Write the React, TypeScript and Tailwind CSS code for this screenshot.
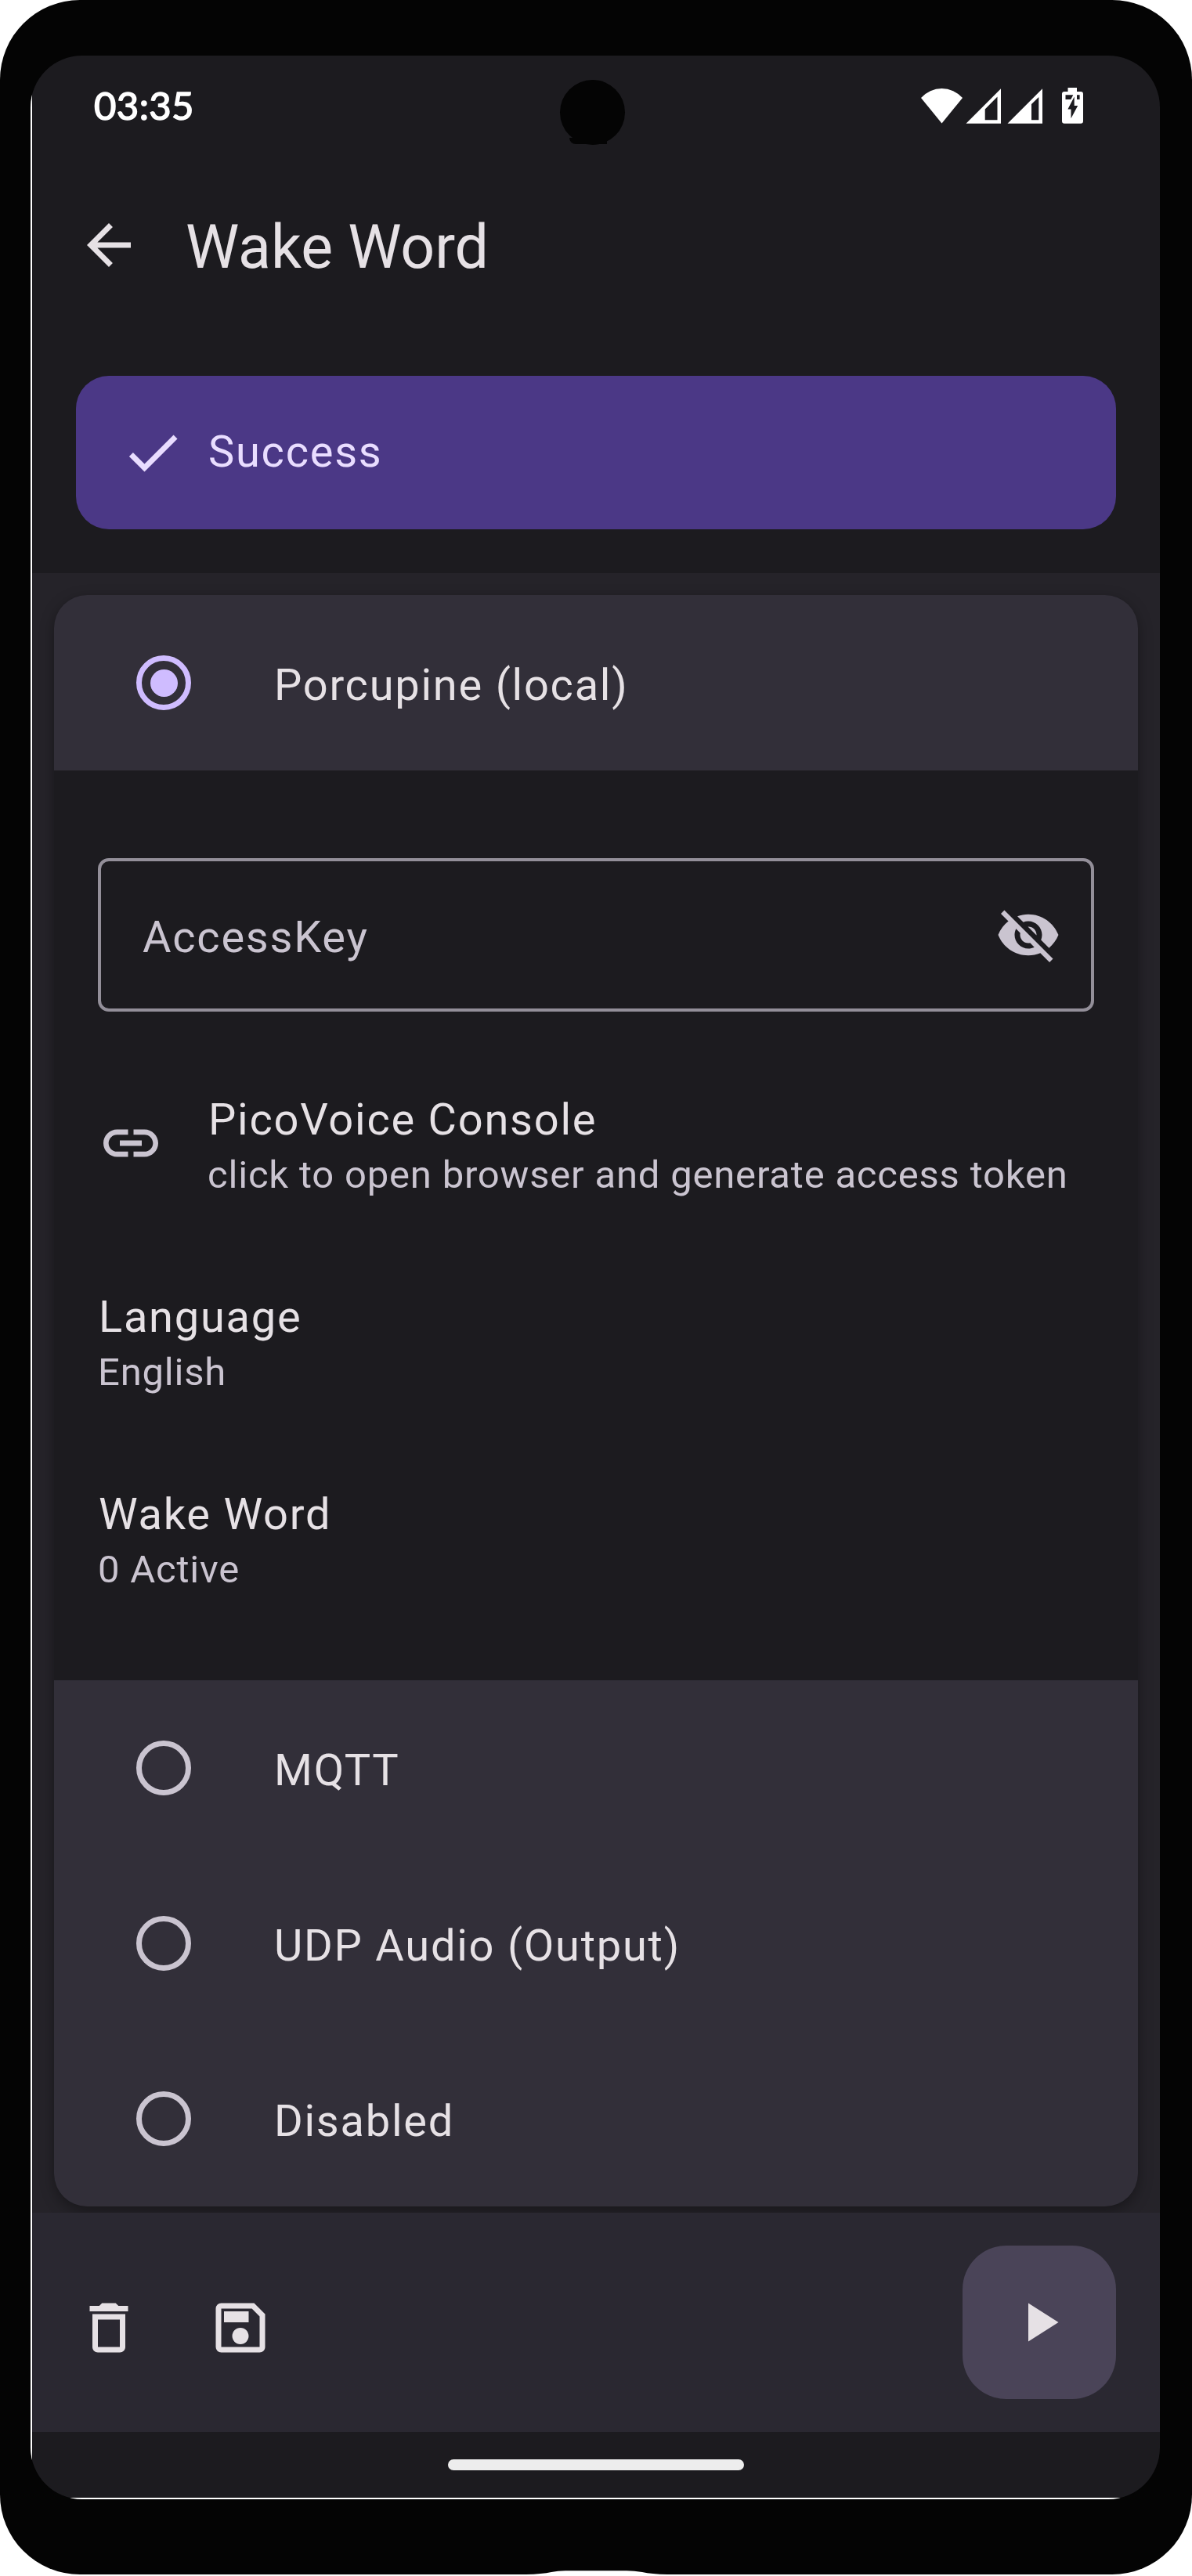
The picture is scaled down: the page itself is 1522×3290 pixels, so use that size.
import React from "react";
import {
  MdArrowBack,
  MdCheck,
  MdLink,
  MdOutlineDelete,
  MdOutlineSave,
  MdPlayArrow,
  MdVisibilityOff,
} from "react-icons/md";

function StatusIcons() {
  return (
    <svg className="h-[46px] w-[207px]" viewBox="1176 112 207 46" fill="#ffffff">
      <path d="M1176 125A35.3 35.3 0 0 1 1229 125L1202.5 157.5Z" />
      <path fillRule="evenodd" d="M1233.5 157.7L1278 113.3V157.7ZM1257.7 153.3H1273.5V123.5L1257.7 139.5Z" />
      <path fillRule="evenodd" d="M1286.5 157.7L1331 113.3V157.7ZM1317 153.3H1326.3V124L1317 133Z" />
      <path
        fillRule="evenodd"
        d="M1363.5 112H1375V117H1380Q1383 117 1383 120V154.7Q1383 157.7 1380 157.7H1359Q1356 157.7 1356 154.7V120Q1356 117 1359 117H1363.5ZM1360.5 121.3V127H1367.3L1370.3 121.3ZM1375 121.3V127H1378.6V121.3ZM1371.7 123.5L1363.4 139.5H1367.5V151.3L1376.2 135H1371.7Z"
      />
    </svg>
  );
}

function Radio({ selected = false }: { selected?: boolean }) {
  return (
    <span
      className={
        selected
          ? "flex size-[70px] items-center justify-center rounded-full border-[7px] border-[#cfbcff]"
          : "flex size-[70px] items-center justify-center rounded-full border-[7px] border-[#cac4d0]"
      }
    >
      {selected && <span className="size-[35px] rounded-full bg-[#cfbcff]" />}
    </span>
  );
}

function OptionRow({ label, selected = false }: { label: string; selected?: boolean }) {
  return (
    <div className="flex h-[224px] items-center bg-[#322f39] pl-[105px]">
      <Radio selected={selected} />
      <span className="ml-[106px] pt-[5px] text-[56px] leading-[84px] tracking-[1.75px] text-[#e6e1e5]">{label}</span>
    </div>
  );
}

function ListItem({ title, detail, icon }: { title: string; detail: string; icon?: React.ReactNode }) {
  return (
    <div className="flex h-[252px] items-start pl-[56px]">
      {icon && <span className="mr-[56px] self-center text-[#cac4d0]">{icon}</span>}
      <div className="whitespace-nowrap pt-[54px]">
        <div className="ml-px text-[56px] leading-[84px] tracking-[1.75px] text-[#e6e1e5]">{title}</div>
        <div className="text-[49px] leading-[58px] tracking-[0.8px] text-[#cac4d0]">{detail}</div>
      </div>
    </div>
  );
}

export default function App() {
  return (
    <div className="h-[3290px] w-[1522px] overflow-hidden bg-white font-['Roboto',sans-serif]">
      <div className="relative h-[3288px] overflow-hidden rounded-[102px] bg-[#040404] pl-[39px] pt-[71px]">
        <div className="h-[3121px] w-[1442px] overflow-hidden rounded-[66px]">
          <div className="flex h-[3121px] flex-col border-b-2 border-l-2 border-white bg-[#1c1b1f]">
            <header className="flex h-[130px] shrink-0 items-start justify-between pl-[79px] pr-[98px] pt-[34px]">
              <span className="font-['Lato',sans-serif] text-[49px] font-normal leading-[58px] tracking-[0.4px] text-white [-webkit-text-stroke:1.5px_white]">
                03:35
              </span>
              <div className="pt-[7px]">
                <StatusIcons />
              </div>
            </header>

            <div className="flex h-[224px] shrink-0 items-center pl-[56px]">
              <MdArrowBack className="size-[84px] text-[#e6e1e5]" />
              <h1 className="ml-[56px] pt-[6px] text-[77px] font-normal leading-[98px] text-[#e6e1e5]">Wake Word</h1>
            </div>

            <div className="h-[307px] shrink-0 px-[56px] pt-[55px]">
              <div className="flex h-[196px] items-center rounded-[42px] bg-[#4b3886] pl-[56px] text-[#e9ddff]">
                <MdCheck className="size-[84px]" />
                <span className="ml-[29px] pb-[2px] text-[56px] leading-[84px] tracking-[1.75px]">Success</span>
              </div>
            </div>

            <main className="h-[2094px] shrink-0 overflow-hidden bg-[#252329] px-[28px] pt-[28px]">
              <div className="overflow-hidden rounded-[42px] bg-[#1c1b1f] shadow-[0_6px_18px_rgba(0,0,0,0.35)]">
                <OptionRow label="Porcupine (local)" selected />
                <div className="h-[1162px] pt-[112px]">
                  <div className="mx-[56px] flex h-[196px] items-center justify-between rounded-[14px] border-4 border-[#938f99] pl-[53px] pr-[38px] text-[#cac4d0]">
                    <span className="pt-[5px] text-[56px] leading-[84px] tracking-[1.75px]">AccessKey</span>
                    <MdVisibilityOff className="size-[84px]" />
                  </div>
                  <div className="pt-[42px]">
                    <ListItem
                      title="PicoVoice Console"
                      detail="click to open browser and generate access token"
                      icon={<MdLink className="size-[84px]" />}
                    />
                    <ListItem title="Language" detail="English" />
                    <ListItem title="Wake Word" detail="0 Active" />
                  </div>
                </div>
                <OptionRow label="MQTT" />
                <OptionRow label="UDP Audio (Output)" />
                <OptionRow label="Disabled" />
              </div>
            </main>

            <footer className="flex h-[280px] shrink-0 items-center bg-[#2a2831] px-[56px] text-[#e6e1e5]">
              <MdOutlineDelete className="mt-[13px] size-[84px]" />
              <MdOutlineSave className="ml-[84px] mt-[13px] size-[84px]" />
              <div className="ml-auto flex size-[196px] items-center justify-center rounded-[56px] bg-[#4a4458]">
                <MdPlayArrow className="size-[84px]" />
              </div>
            </footer>

            <div className="flex h-[84px] shrink-0 items-center justify-center">
              <span className="h-[14px] w-[378px] rounded-[7px] bg-[#ededed]" />
            </div>
          </div>
        </div>

        {/* front camera */}
        <span className="absolute left-[715px] top-[102px] size-[83px] rounded-full bg-[#040404]" />
        <span className="absolute left-[727px] top-[176px] h-[8px] w-[48px] rounded-bl-[12px] bg-[#040404]" />
        {/* recess in the lower edge of the case */}
        <svg className="absolute bottom-0 left-[672px] h-[5px] w-[180px]" viewBox="0 0 180 5" fill="#ffffff">
          <path d="M0 5Q20 4.5 32 2Q40 0.3 50 0.3H128Q138 0.3 148 2Q160 4.5 180 5Z" />
        </svg>
      </div>
    </div>
  );
}
